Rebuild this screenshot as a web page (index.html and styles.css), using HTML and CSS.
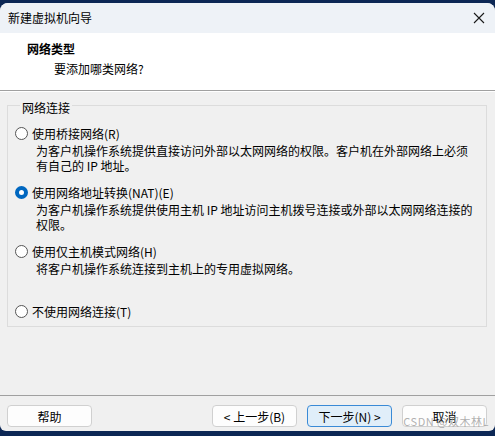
FILE: index.html
```html
<!DOCTYPE html>
<html lang="zh-CN">
<head>
    <meta charset="UTF-8">
    <title>新建虚拟机向导</title>
    <link rel="stylesheet" href="styles.css">
</head>
<body>
    <div class="window">
        <!-- Title bar -->
        <div class="titlebar">
            <span class="title">新建虚拟机向导</span>
            <svg class="close" width="12" height="12" viewBox="0 0 12 12">
                <path d="M1 1 L11 11 M11 1 L1 11" stroke="#1a1a1a" stroke-width="1.1" fill="none"/>
            </svg>
        </div>

        <!-- Page header -->
        <div class="header">
            <div class="header-title">网络类型</div>
            <div class="header-sub">要添加哪类网络?</div>
        </div>

        <div class="content">
            <fieldset class="group">
                <legend>网络连接</legend>

                <div class="option first">
                    <div class="radio-line"><span class="radio"></span>使用桥接网络(R)</div>
                    <div class="desc">为客户机操作系统提供直接访问外部以太网网络的权限。客户机在外部网络上必须<br>有自己的 IP 地址。</div>
                </div>

                <div class="option">
                    <div class="radio-line"><span class="radio checked"></span>使用网络地址转换(NAT)(E)</div>
                    <div class="desc">为客户机操作系统提供使用主机 IP 地址访问主机拨号连接或外部以太网网络连接的<br>权限。</div>
                </div>

                <div class="option">
                    <div class="radio-line"><span class="radio"></span>使用仅主机模式网络(H)</div>
                    <div class="desc">将客户机操作系统连接到主机上的专用虚拟网络。</div>
                </div>

                <div class="option last">
                    <div class="radio-line"><span class="radio"></span>不使用网络连接(T)</div>
                </div>
            </fieldset>
        </div>

        <!-- Buttons -->
        <div class="footer">
            <button class="btn">帮助</button>
            <div class="spacer"></div>
            <button class="btn">&lt; 上一步(B)</button>
            <button class="btn default">下一步(N) &gt;</button>
            <button class="btn">取消</button>
        </div>

        <div class="watermark">CSDN @双木林L</div>
    </div>
</body>
</html>
```

FILE: styles.css
```css
body {
    margin: 0;
    height: 436px;
    overflow: hidden;
    background: #0c2755;
    font-family: "Noto Sans CJK SC", "Liberation Sans", sans-serif;
    font-size: 12px;
    color: #000;
}
.window {
    position: relative;
    margin-top: 3px;
    height: 428px;
    background: #f0f0f0;
    border-radius: 8px 8px 6px 6px;
    overflow: hidden;
    display: flex;
    flex-direction: column;
}
.titlebar {
    height: 30px;
    background: #eef2f7;
    display: flex;
    align-items: center;
    padding: 0 10px 0 8px;
}
.title {
    flex: 1;
    line-height: 16px;
}
.close {
    display: block;
}
.header {
    height: 58px;
    background: #fff;
    border-bottom: 1px solid #a0a0a0;
    padding-left: 27px;
    box-sizing: border-box;
    padding-top: 7px;
}
.header-title {
    font-weight: bold;
    line-height: 18px;
}
.header-sub {
    line-height: 18px;
    margin-top: 2px;
    padding-left: 27px;
}
.content {
    flex: 1;
    border-top: 1px solid #fff;
    border-bottom: 1px solid #a0a0a0;
    padding: 4px 8px 0 7px;
}
.group {
    margin: 0;
    padding: 0 0 0 7px;
    border: 1px solid #dcdcdc;
    height: 229px;
}
.group legend {
    margin-left: 5px;
    padding: 6px 2px 0;
    line-height: 12px;
}
.option {
    margin-top: 12px;
}
.option.first {
    margin-top: 12px;
}
.option.last {
    margin-top: 28px;
}
.radio-line {
    display: flex;
    align-items: center;
    line-height: 15px;
}
.radio {
    width: 11px;
    height: 11px;
    border: 1px solid #555;
    border-radius: 50%;
    background: #fff;
    margin-right: 4px;
    box-sizing: content-box;
}
.radio.checked {
    width: 5px;
    height: 5px;
    border: 4px solid #0067c0;
    background: #fff;
}
.desc {
    padding-left: 21px;
    line-height: 15px;
    margin-top: 2px;
}
.footer {
    height: 35px;
    display: flex;
    align-items: flex-start;
    padding: 9px 8px 0 7px;
    box-sizing: border-box;
}
.spacer {
    flex: 1;
}
.btn {
    width: 85px;
    height: 22px;
    margin-left: 10px;
    font-family: inherit;
    font-size: 12px;
    color: #000;
    background: #fdfdfd;
    border: 1px solid #d0d0d0;
    border-radius: 4px;
    padding: 0;
}
.btn:first-child {
    margin-left: 0;
}
.btn.default {
    background: #e0eef9;
    border-color: #3a8ad6;
}
.watermark {
    position: absolute;
    right: 6px;
    bottom: 2px;
    font-size: 11px;
    color: rgba(150, 150, 150, 0.75);
    letter-spacing: 0.5px;
}
```
